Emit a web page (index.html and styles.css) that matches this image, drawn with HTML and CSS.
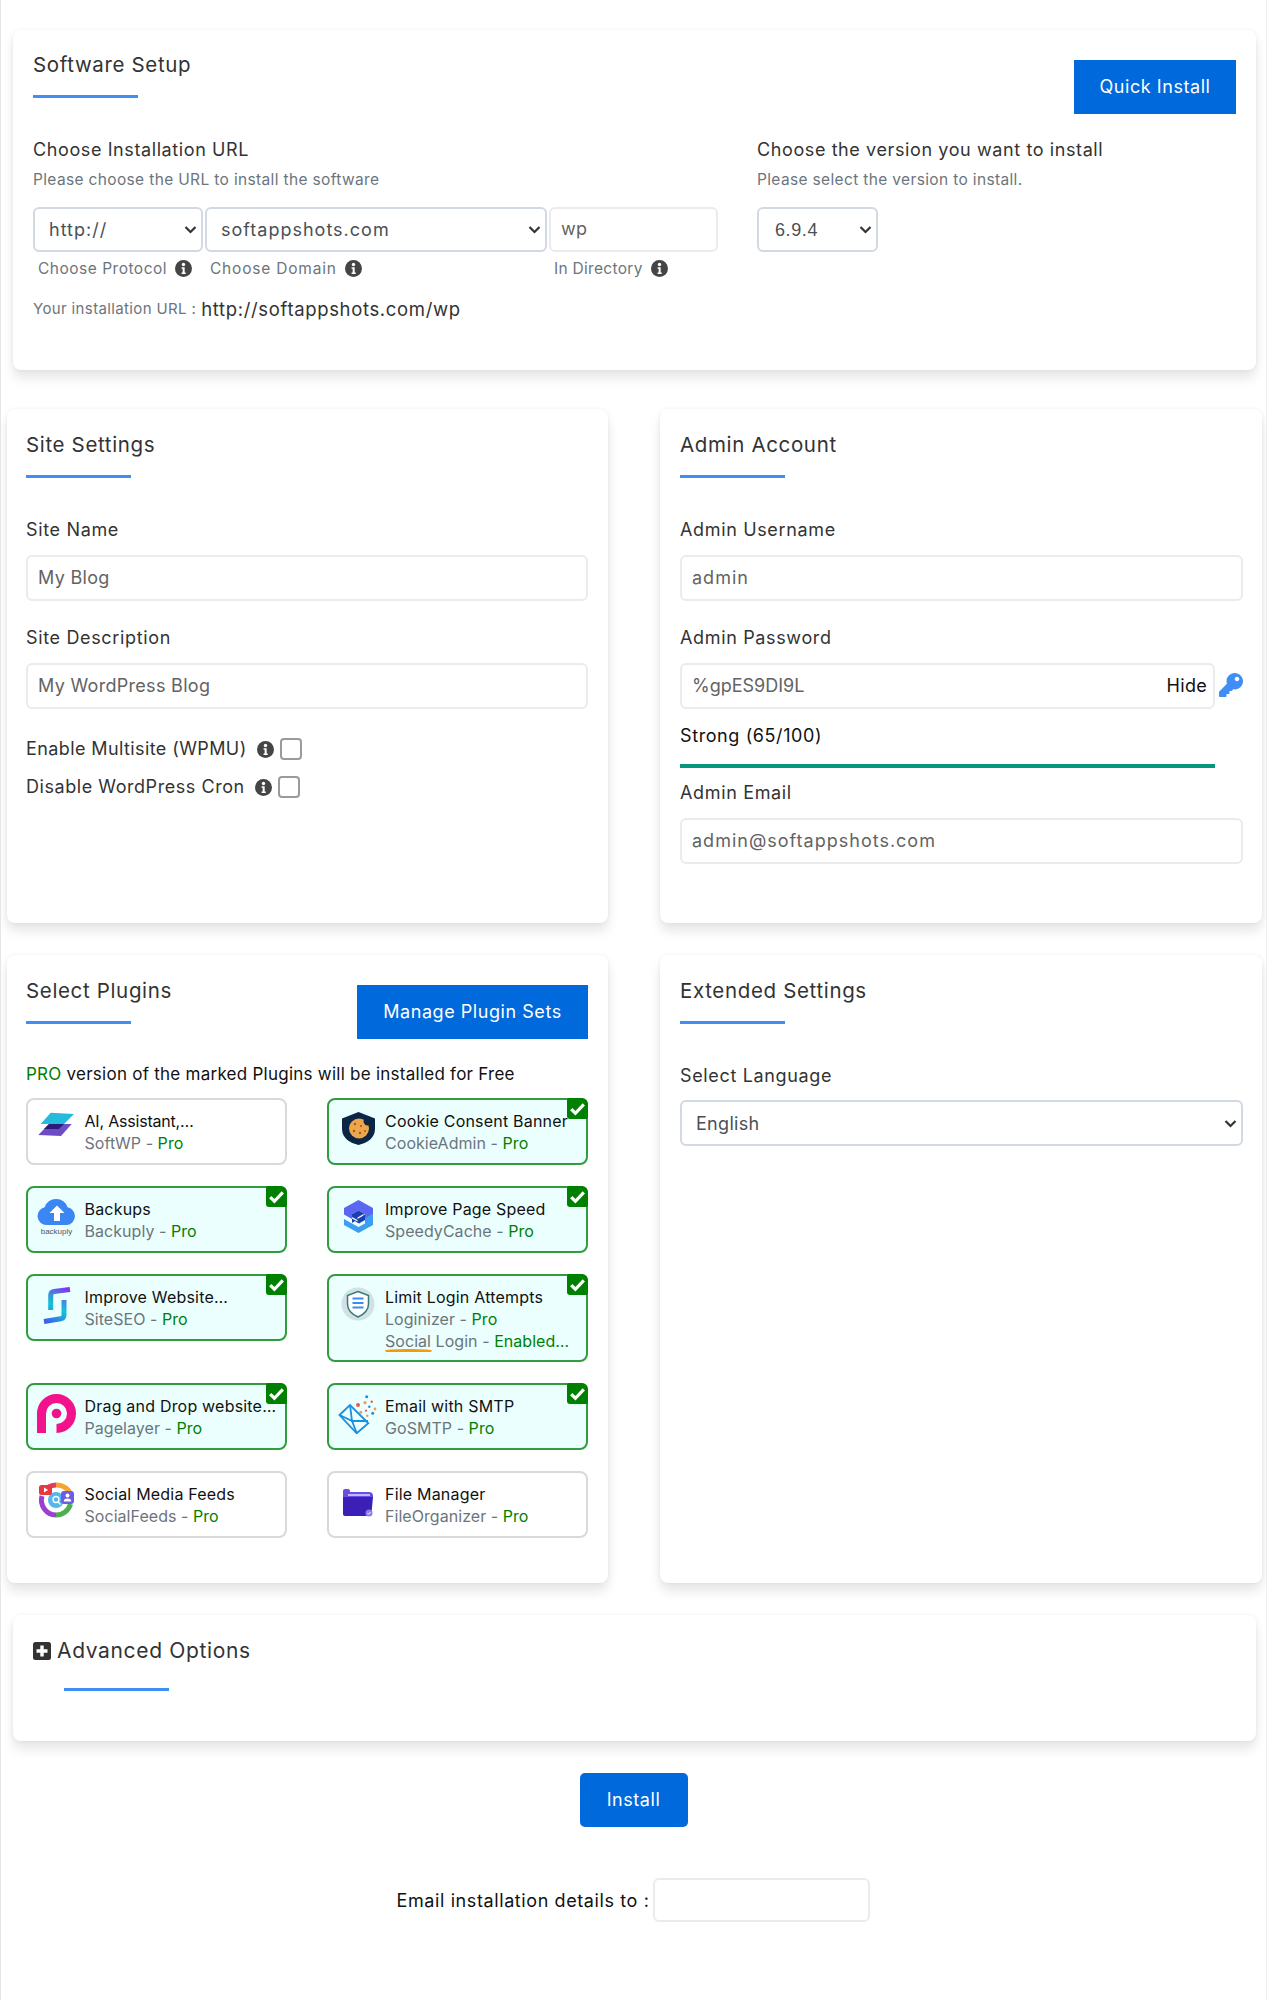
FILE: index.html
```html
<!DOCTYPE html>
<html lang="en">
<head>
<meta charset="utf-8">
<title>Software Setup</title>
<link rel="stylesheet" href="styles.css">
</head>
<body>
<svg class="defs" width="0" height="0" aria-hidden="true">
  <defs>
    <symbol id="info" viewBox="0 0 16 16"><circle cx="8" cy="8" r="8" fill="#454545"/><circle cx="8" cy="4.3" r="1.6" fill="#fff"/><path d="M6.200 6.800h2.900v5h1v1.400H6.200v-1.400h1V8.200h-1z" fill="#fff"/></symbol>
    <symbol id="tick" viewBox="0 0 20 20"><path d="M4 10.500l4 4 8-8.500" fill="none" stroke="#fff" stroke-width="3"/></symbol>
  </defs>
</svg>
<main class="page">
  <section class="card wide setup">
    <div class="head">
      <div>
        <h2 class="title">Software Setup</h2>
        <div class="rule"></div>
      </div>
      <button class="btn quick">Quick Install</button>
    </div>
    <div class="setup-cols">
      <div class="url-col">
        <h3 class="heading">Choose Installation URL</h3>
        <p class="hint">Please choose the URL to install the software</p>
        <div class="url-row">
          <select class="field sel proto roomy"><option>http://</option></select>
          <select class="field sel domain roomy"><option>softappshots.com</option></select>
          <input class="field dir" value="wp">
        </div>
        <div class="url-row url-labels">
          <span class="proto lab">Choose Protocol <svg class="info"><use href="#info"/></svg></span>
          <span class="domain lab">Choose Domain <svg class="info"><use href="#info"/></svg></span>
          <span class="dir lab">In Directory <svg class="info"><use href="#info"/></svg></span>
        </div>
        <p class="your-url"><span class="your-label">Your installation URL :</span> <span class="your-value">http://softappshots.com/wp</span></p>
      </div>
      <div class="ver-col">
        <h3 class="heading">Choose the version you want to install</h3>
        <p class="hint">Please select the version to install.</p>
        <div class="url-row"><select class="field sel version"><option>6.9.4</option></select></div>
      </div>
    </div>
  </section>

  <div class="row settings-row">
    <section class="card half">
      <h2 class="title">Site Settings</h2>
      <div class="rule"></div>
      <label class="label first">Site Name</label>
      <input class="field full" value="My Blog">
      <label class="label">Site Description</label>
      <input class="field full" value="My WordPress Blog">
      <div class="check-row one"><span>Enable Multisite (WPMU)</span><svg class="info"><use href="#info"/></svg><input class="check" type="checkbox"></div>
      <div class="check-row two"><span>Disable WordPress Cron</span><svg class="info"><use href="#info"/></svg><input class="check" type="checkbox"></div>
    </section>
    <section class="card half">
      <h2 class="title">Admin Account</h2>
      <div class="rule"></div>
      <label class="label first">Admin Username</label>
      <input class="field full roomy" value="admin">
      <label class="label">Admin Password</label>
      <div class="pass-row">
        <div class="pass-box"><input class="field pass" value="%gpES9DI9L"><span class="hide">Hide</span></div>
        <svg class="key" viewBox="0 0 512 512"><path fill="#3f8ef5" d="M512 176.001C512 273.203 433.202 352 336 352c-11.22 0-22.19-1.062-32.827-3.069l-24.012 27.014A23.999 23.999 0 0 1 261.223 384H224v40c0 13.255-10.745 24-24 24h-40v40c0 13.255-10.745 24-24 24H24c-13.255 0-24-10.745-24-24v-78.059c0-6.365 2.529-12.47 7.029-16.971l161.802-161.802C163.108 213.814 160 195.271 160 176 160 78.798 238.797.001 335.999 0 433.488-.001 512 78.511 512 176.001zM336 128c0 26.51 21.49 48 48 48s48-21.49 48-48-21.49-48-48-48-48 21.49-48 48z"/></svg>
      </div>
      <div class="strength">Strong (65/100)</div>
      <div class="bar"></div>
      <label class="label email-label">Admin Email</label>
      <input class="field full roomy" value="admin@softappshots.com">
    </section>
  </div>

  <div class="row plugins-row">
    <section class="card half">
      <div class="plug-head">
        <div>
          <h2 class="title">Select Plugins</h2>
          <div class="rule"></div>
        </div>
        <button class="btn manage">Manage Plugin Sets</button>
      </div>
      <p class="pro-note"><span class="green">PRO</span> version of the marked Plugins will be installed for Free</p>
      <div class="plugin-grid">
        <div class="plugin">
          <svg class="pico" viewBox="0 0 40 40"><polygon points="13.700,3.700 37,5 27,15 3.700,15" fill="#24bbdd"/><polygon points="12,15 34.700,15 24,27 1.300,26" fill="#6d4cc6"/><polygon points="12,15 27,15 22,20 7,20" fill="#2a1b7c"/></svg>
          <div class="ptext"><div class="pname tight">AI, Assistant,…</div><div class="psub">SoftWP - <span class="green">Pro</span></div></div>
        </div>
        <div class="plugin on">
          <svg class="pico" viewBox="0 0 40 40"><path d="M20.500 3L37 9.500V20c0 9-8 14-16.500 16C12 34 4 29 4 20V9.500z" fill="#0b2545"/><circle cx="21" cy="19.500" r="10" fill="#eea64c"/><circle cx="30" cy="12" r="4.500" fill="#0b2545"/><g fill="#9a5f22"><circle cx="17" cy="15" r="1.200"/><circle cx="23" cy="17" r="1.100"/><circle cx="16" cy="22" r="1.200"/><circle cx="22" cy="24" r="1.200"/><circle cx="27" cy="22" r="1"/></g></svg>
          <div class="ptext"><div class="pname">Cookie Consent Banner</div><div class="psub">CookieAdmin - <span class="green">Pro</span></div></div>
          <span class="tick"><svg><use href="#tick"/></svg></span>
        </div>
        <div class="plugin on">
          <svg class="pico" viewBox="0 0 40 40"><path d="M19.500 2a11.500 11.500 0 0 1 11 8.200A9 9 0 0 1 30 28H9.500a9 9 0 0 1-1.800-17.800A11.500 11.500 0 0 1 19.500 2z" fill="#3a86f2"/><path d="M20 8.500l7.500 7.500H23v8h-6v-8h-4.500z" fill="#fff"/><text x="19.500" y="36.500" class="bk-text">backuply</text></svg>
          <div class="ptext"><div class="pname">Backups</div><div class="psub">Backuply - <span class="green">Pro</span></div></div>
          <span class="tick"><svg><use href="#tick"/></svg></span>
        </div>
        <div class="plugin on">
          <svg class="pico" viewBox="0 0 40 40"><path d="M20.500 3L35 11v7l-8 4.500V17l-6.500-3.500L14 17v5L6 17.500V11z" fill="#5b66f2"/><path d="M6 22l8 4.500 6.500 3.500 6.500-3.500V21l8-4.500V28l-14.500 8L6 28z" fill="#3d9df0"/><path d="M14 17l6.500-3.500L27 17l-13 9v-4z" fill="#1d3fb3"/><path d="M14 17.500v5l7 4 6-3.500v-5z" fill="#1d3fb3"/><path d="M19.500 20.500l6-3.500v1.500l-6 3.500z" fill="#ebfffe"/><path d="M14 20l5.500 3v1.500L14 21.500z" fill="#ebfffe"/></svg>
          <div class="ptext"><div class="pname">Improve Page Speed</div><div class="psub">SpeedyCache - <span class="green">Pro</span></div></div>
          <span class="tick"><svg><use href="#tick"/></svg></span>
        </div>
        <div class="plugin on">
          <svg class="pico" viewBox="0 0 40 40"><defs><linearGradient id="seo" gradientUnits="userSpaceOnUse" x1="30" y1="2" x2="10" y2="38"><stop offset="0" stop-color="#8b2cf0"/><stop offset=".55" stop-color="#0fc6d6"/><stop offset="1" stop-color="#3b5cf0"/></linearGradient></defs><path d="M33 4.500L17 6.500c-2.500.3-3.300 1.500-3.300 4V25" fill="none" stroke="url(#seo)" stroke-width="5"/><path d="M27 15v15c0 2.500-1 3.500-3.300 3.800L7 36.500" fill="none" stroke="url(#seo)" stroke-width="5"/></svg>
          <div class="ptext"><div class="pname">Improve Website…</div><div class="psub">SiteSEO - <span class="green">Pro</span></div></div>
          <span class="tick"><svg><use href="#tick"/></svg></span>
        </div>
        <div class="plugin on">
          <svg class="pico" viewBox="0 0 40 40"><circle cx="20" cy="19" r="16.500" fill="#d4dfe6"/><path d="M20 6.500l10.500 4V19c0 6.500-5 10.500-10.500 13-5.500-2.500-10.500-6.500-10.500-13v-8.500z" fill="#fff" stroke="#2f7f78" stroke-width="1.500"/><path d="M14.500 13.500h11M14.500 18h11M14.500 22.500h11" stroke="#3b8bf0" stroke-width="1.800"/></svg>
          <div class="ptext"><div class="pname">Limit Login Attempts</div><div class="psub">Loginizer - <span class="green">Pro</span></div><div class="psub third"><span class="social">Social</span> Login - <span class="green">Enabled…</span></div></div>
          <span class="tick"><svg><use href="#tick"/></svg></span>
        </div>
        <div class="plugin on">
          <svg class="pico" viewBox="0 0 40 40"><path d="M4.500 39V19.500a15 15 0 1 1 15 15" fill="none" stroke="#f2138c" stroke-width="9"/><circle cx="19.500" cy="19.500" r="4.800" fill="#f2138c"/></svg>
          <div class="ptext"><div class="pname">Drag and Drop website…</div><div class="psub">Pagelayer - <span class="green">Pro</span></div></div>
          <span class="tick"><svg><use href="#tick"/></svg></span>
        </div>
        <div class="plugin on">
          <svg class="pico" viewBox="0 0 40 40"><path d="M1.500 21L12 11l18.300 18.300L18.700 39.300z" fill="none" stroke="#1b8fe0" stroke-width="1.800"/><path d="M12 11l2 16h16" fill="none" stroke="#1b8fe0" stroke-width="1.800"/><path d="M1.500 21L14 27l4.700 12" fill="none" stroke="#1b8fe0" stroke-width="1.800"/><g fill="#1b8fe0"><circle cx="28.700" cy="2.700" r="1.500"/><circle cx="31.300" cy="12.700" r="1.200"/><circle cx="34.700" cy="19.300" r="1.500"/></g><g fill="#f0574f"><circle cx="33.700" cy="7.700" r="1.200"/><circle cx="20" cy="11" r="2"/><circle cx="28" cy="16.700" r="1.100"/></g><g fill="#f79a4a"><circle cx="27" cy="8.700" r="1.600"/><circle cx="37" cy="15" r="1.400"/><circle cx="22.700" cy="18.300" r="1.500"/><circle cx="29.300" cy="21.700" r="1.200"/></g></svg>
          <div class="ptext"><div class="pname">Email with SMTP</div><div class="psub">GoSMTP - <span class="green">Pro</span></div></div>
          <span class="tick"><svg><use href="#tick"/></svg></span>
        </div>
        <div class="plugin">
          <svg class="pico" viewBox="0 0 40 40"><path d="M6 11A15 15 0 0 1 19 3" fill="none" stroke="#e53b6a" stroke-width="5"/><path d="M19 3a15 15 0 0 1 15 10" fill="none" stroke="#f7a42c" stroke-width="5"/><path d="M33.500 22a15 15 0 0 1-14.500 11" fill="none" stroke="#4cb050" stroke-width="5"/><path d="M19 33A15 15 0 0 1 5 14" fill="none" stroke="#9c3fcf" stroke-width="5"/><circle cx="19" cy="18" r="8" fill="#53b7ee"/><circle cx="19" cy="17.500" r="3" fill="none" stroke="#fff" stroke-width="1.300"/><path d="M21 20l2.500 2.500" stroke="#fff" stroke-width="1.300"/><rect x="2" y="3" width="13" height="10" rx="2.500" fill="#e8383f"/><path d="M7 5.500l4 2.500-4 2.500z" fill="#fff"/><rect x="24" y="9" width="13" height="13" rx="3" fill="#6a5ce8"/><circle cx="30.500" cy="13.500" r="2" fill="#fff"/><path d="M26.700 19.500a3.800 3 0 0 1 7.600 0z" fill="#fff"/></svg>
          <div class="ptext"><div class="pname">Social Media Feeds</div><div class="psub">SocialFeeds - <span class="green">Pro</span></div></div>
        </div>
        <div class="plugin">
          <svg class="pico" viewBox="0 0 40 40"><path d="M5 9a2 2 0 0 1 2-2h3a2 2 0 0 1 2 2v2h-7z" fill="#6a4de8"/><path d="M5 10h26a4 4 0 0 1 4 4v2H5z" fill="#6a4de8"/><path d="M10 13h22" stroke="#fff" stroke-width="1.200"/><path d="M5 15h30l-1.500 16a3 3 0 0 1-3 3H7a2 2 0 0 1-2-2z" fill="#3c1fb6"/><circle cx="31" cy="31" r="3.500" fill="#8f79f2"/><path d="M29.500 31l1.200 1.200 2-2.200" fill="none" stroke="#fff" stroke-width=".9"/></svg>
          <div class="ptext"><div class="pname">File Manager</div><div class="psub">FileOrganizer - <span class="green">Pro</span></div></div>
        </div>
      </div>
    </section>
    <section class="card half">
      <h2 class="title">Extended Settings</h2>
      <div class="rule"></div>
      <label class="label lang-label">Select Language</label>
      <select class="field sel lang"><option>English</option></select>
    </section>
  </div>

  <section class="card wide advanced">
    <h2 class="title adv-title"><svg class="plus" viewBox="0 0 18 18"><rect width="18" height="18" rx="2.500" fill="#333"/><path d="M7.300 3.500h3.400v3.800h3.800v3.400h-3.800v3.800H7.300v-3.800H3.500V7.300h3.800z" fill="#fff"/></svg>Advanced Options</h2>
    <div class="rule adv-rule"></div>
  </section>

  <div class="install-row"><button class="btn install">Install</button></div>
  <div class="email-row"><label class="email-text">Email installation details to :</label><input class="field email-input"></div>
</main>
</body>
</html>
```
FILE: styles.css
```css
* { box-sizing: border-box; }
html, body { margin: 0; background: #fff; }
body { font-family: Inter, "Noto Sans", Arial, sans-serif; color: #333; }
.defs { position: absolute; }
.page {
  width: 1267px;
  height: 2000px;
  padding-top: 30px;
  border-left: 1px solid #e6e6e6;
  border-right: 1px solid #efefef;
  overflow: hidden;
}
.card {
  background: #fff;
  border-radius: 8px;
  box-shadow: 0 8px 12px rgba(0, 0, 0, .10), 0 0 4px rgba(0, 0, 0, .06);
}
.wide { margin-left: 12px; width: 1243px; padding: 20px 20px 0; }
.setup { height: 340px; }
.head { display: flex; justify-content: space-between; align-items: flex-start; }
.title { margin: 0; padding-top: 1px; height: 28px; font-size: 20.500px; line-height: 28px; font-weight: 400; letter-spacing: .65px; color: #333; }
.rule { width: 105px; height: 3px; margin-top: 17px; background: #3f8ef5; }
.btn {
  border: 0;
  background: #0069dc;
  color: #fff;
  font-family: inherit;
  font-size: 18px;
  height: 54px;
  padding: 0 0 2px;
  letter-spacing: .55px;
}
.quick { width: 162px; margin-top: 10px; }
.manage { width: 231px; margin-top: 9px; }
.setup-cols { display: flex; margin-top: 23px; }
.url-col { width: 724px; }
.heading { margin: 0; font-size: 18px; line-height: 26px; font-weight: 400; letter-spacing: .6px; color: #333; }
.hint { margin: 6px 0 0; font-size: 15.500px; line-height: 22px; color: #6c757d; letter-spacing: .35px; }
.url-row { display: flex; gap: 2px; margin-top: 16px; }
.field {
  height: 45px;
  border: 2px solid #ebebeb;
  border-radius: 6px;
  background: #fff;
  color: #636363;
  font-family: inherit;
  font-size: 18px;
  letter-spacing: .3px;
  padding: 0 10px 2px;
  outline: 0;
}
.roomy { letter-spacing: 1px; }
.sel {
  appearance: none;
  border-color: #d3d9e2;
  color: #495057;
  padding: 0 24px 0 14px;
  background: #fff url("data:image/svg+xml,%3Csvg xmlns='http://www.w3.org/2000/svg' width='13' height='9' viewBox='0 0 13 9'%3E%3Cpath d='M1.500 2l5 5 5-5' fill='none' stroke='%23333' stroke-width='2.200'/%3E%3C/svg%3E") no-repeat right 4px center;
}
.proto { width: 170px; }
.domain { width: 342px; }
.dir { width: 169px; }
.version { width: 121px; font-family: "Liberation Sans", sans-serif; padding-left: 16px; letter-spacing: .6px; }
.url-labels { margin-top: 6px; }
.lab {
  display: flex;
  align-items: center;
  gap: 8px;
  height: 20px;
  padding-left: 5px;
  font-size: 15.500px;
  color: #6c757d;
  letter-spacing: .5px;
  white-space: nowrap;
}
.lab.domain { letter-spacing: .8px; }
.lab.dir { letter-spacing: .3px; }
.info { width: 17px; height: 17px; flex: none; }
.your-url { margin: 19px 0 0; line-height: 24px; display: flex; align-items: center; gap: 5px; }
.your-label { font-size: 15px; color: #6c757d; letter-spacing: .37px; }
.your-value { font-size: 18.500px; color: #333; letter-spacing: .65px; }

.row { display: flex; gap: 52px; margin-left: 6px; margin-top: 32px; }
.settings-row { margin-top: 39px; }
.half { width: 601px; padding: 21px 20px 0 19px; height: 514px; }
.half + .half { width: 602px; padding: 21px 19px 0 20px; }
.plugins-row .half { height: 628px; }
.label { display: block; margin: 25px 0 13px; font-size: 18px; line-height: 24px; letter-spacing: .65px; color: #333; }
.label.first { margin-top: 40px; margin-bottom: 13px; }
.full { width: 100%; height: 46px; display: block; }
.check-row { display: flex; align-items: center; margin-top: 16px; font-size: 18px; line-height: 22px; letter-spacing: .4px; }
.check-row.two { letter-spacing: .55px; }
.check-row.one { margin-top: 29px; }
.check-row .info { margin-left: 10px; }
.check {
  appearance: none;
  width: 22px;
  height: 22px;
  margin: 0 0 0 6px;
  border: 2px solid #9a9a9a;
  border-radius: 4px;
  background: #fff;
}
.pass-row { display: flex; align-items: center; gap: 4px; }
.pass-box { position: relative; width: 535px; }
.pass { width: 100%; height: 46px; display: block; padding-right: 60px; letter-spacing: 0; }
.hide { position: absolute; right: 8px; top: 11px; font-size: 18px; line-height: 24px; color: #111; letter-spacing: .3px; }
.key { width: 24px; height: 24px; margin-top: -2px; }
.strength { margin-top: 15px; font-size: 18px; line-height: 24px; color: #111; letter-spacing: .6px; }
.bar { width: 535px; height: 4px; margin-top: 16px; background: #08967f; }
.label.email-label { margin-top: 13px; }
.lang-label.label { margin-top: 40px; margin-bottom: 12px; }
.lang { width: 100%; height: 46px; }

.plug-head { display: flex; justify-content: space-between; align-items: flex-start; }
.pro-note { margin: 23px 0 12px; font-size: 17px; line-height: 24px; color: #111; letter-spacing: .25px; }
.green { color: #008000; }
.plugin-grid { display: grid; grid-template-columns: 261px 261px; column-gap: 39.500px; row-gap: 21px; align-items: start; }
.plugin {
  position: relative;
  display: flex;
  gap: 7.500px;
  min-height: 67px;
  padding: 10px 0 8px 9px;
  border: 2px solid #d9d9d9;
  border-radius: 8px;
  background: #fff;
}
.plugin.on { border-color: #2f9c3d; background: #ebfffe; }
.pico { width: 40px; height: 40px; flex: none; margin-top: -1px; }
.ptext { min-width: 0; }
.pname { font-size: 16px; line-height: 22px; color: #111; white-space: nowrap; letter-spacing: .2px; }
.pname.tight { letter-spacing: -.2px; }
.psub { font-size: 16px; line-height: 22px; color: #6c757d; white-space: nowrap; letter-spacing: .05px; }
.third { position: relative; }
.social { position: relative; display: inline-block; }
.social::after {
  content: "";
  position: absolute;
  left: 0;
  right: -1px;
  bottom: 0;
  height: 3px;
  border-radius: 50% 50% 2px 2px;
  background: #f59a0b;
}
.tick {
  position: absolute;
  top: -2px;
  right: -2px;
  width: 21px;
  height: 21px;
  background: #008000;
  border-radius: 2px 6px 2px 3px;
}
.tick svg { display: block; width: 21px; height: 21px; }
.bk-text { font-family: "Liberation Sans", Arial, sans-serif; font-size: 8px; fill: #4b5563; text-anchor: middle; }

.advanced { height: 126px; margin-top: 32px; padding-top: 21px; }
.adv-title { display: flex; align-items: center; gap: 6px; font-size: 21px; letter-spacing: .65px; }
.plus { width: 18px; height: 18px; flex: none; }
.adv-rule { margin-top: 24px; margin-left: 31px; }
.install-row { display: flex; justify-content: center; margin-top: 32px; }
.install { width: 108px; border-radius: 5px; }
.email-row { display: flex; justify-content: center; align-items: center; gap: 4px; margin-top: 51px; }
.email-text { font-size: 18px; color: #111; letter-spacing: .6px; }
.email-input { width: 217px; height: 44px; }
```
